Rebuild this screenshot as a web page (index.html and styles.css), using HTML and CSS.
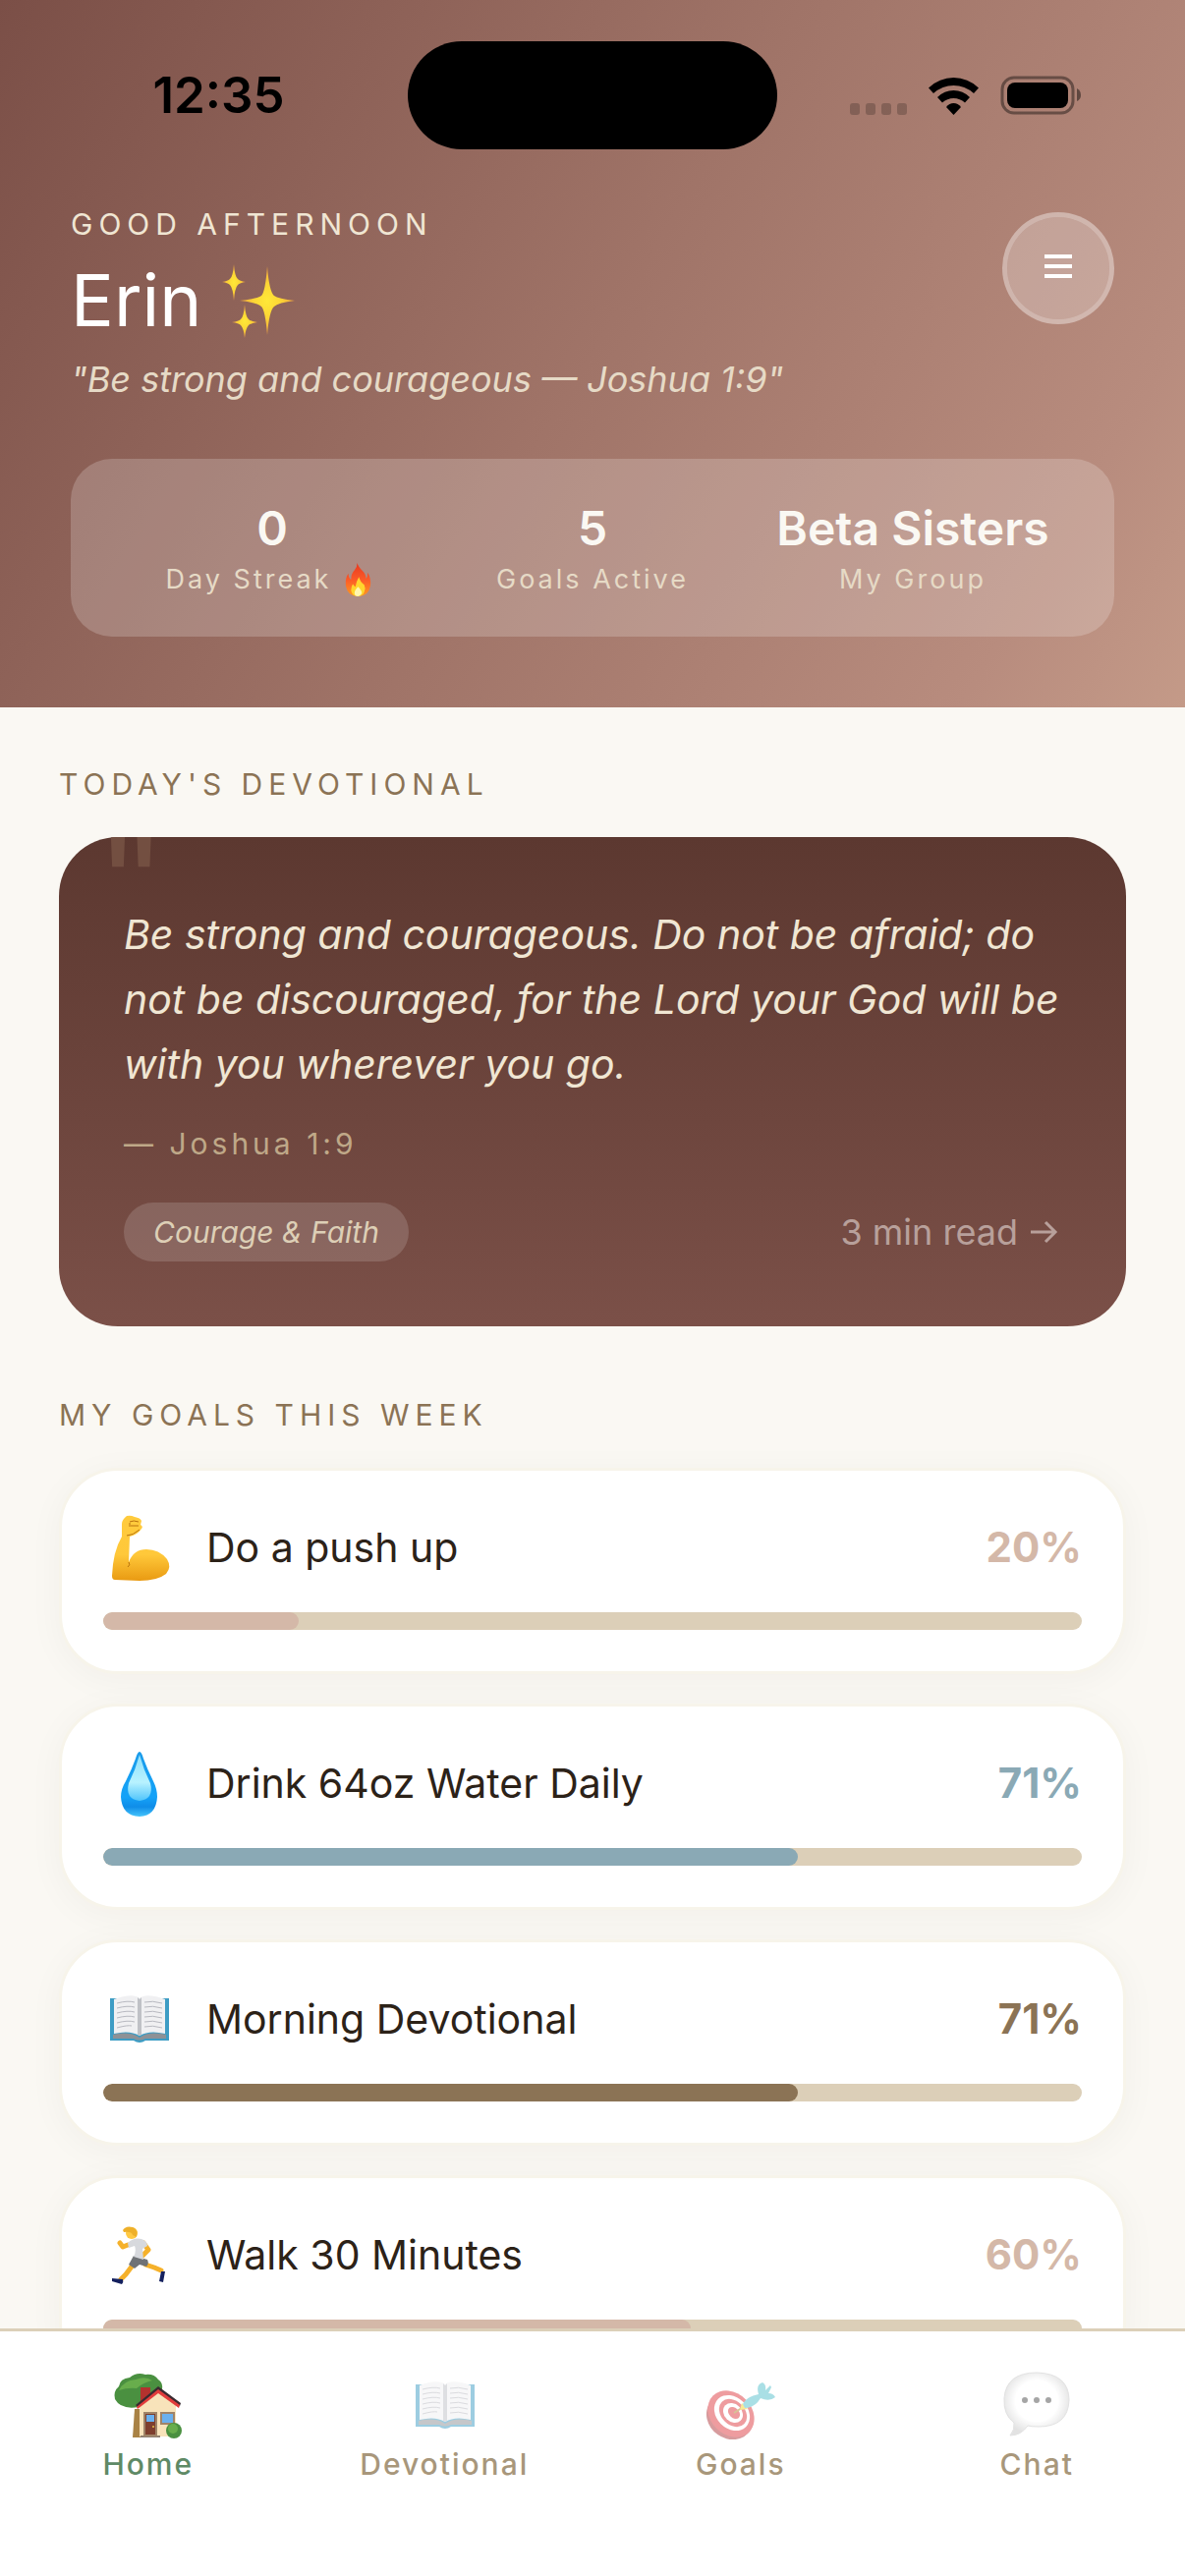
FILE: index.html
```
<!DOCTYPE html>
<html lang="en">
<head>
  <meta charset="UTF-8">
  <meta name="viewport" content="width=device-width, initial-scale=1">
  <title>Home</title>
  <link rel="stylesheet" href="styles.css">
</head>
<body>
  <header class="header">
    <!-- Status bar -->
    <div class="status-bar">
      <div class="status-time">12:35</div>
      <div class="island"></div>
      <div class="status-icons">
        <svg class="icon-signal" viewBox="0 0 58 12">
          <rect x="0" width="10" height="12" rx="3"/>
          <rect x="16" width="10" height="12" rx="3"/>
          <rect x="32" width="10" height="12" rx="3"/>
          <rect x="48" width="10" height="12" rx="3"/>
        </svg>
        <svg class="icon-wifi" viewBox="0 0 51 38">
          <path d="M0 10.500Q11 0 25.500 0Q40 0 51 10.500L46 16Q37 8 25.500 8Q14 8 5 16Z"/>
          <path d="M9 20Q16 13 25.500 13Q35 13 42 20L37 25.500Q32 21 25.500 21Q19 21 14 25.500Z"/>
          <path d="M18 30Q21 26 25.500 26Q30 26 33 30L25.500 38Z"/>
        </svg>
        <svg class="icon-battery" viewBox="0 0 84 40">
          <rect class="battery-shell" x="2" y="2" width="72" height="36" rx="12"/>
          <rect x="7" y="7" width="62" height="26" rx="8"/>
          <path class="battery-tip" d="M78 13Q82 15 82 20Q82 24 78 26Z"/>
        </svg>
      </div>
    </div>

    <div class="greeting-row">
      <div class="greeting">
        <p class="greeting-time">GOOD AFTERNOON</p>
        <h1 class="greeting-name">Erin
          <svg class="icon-sparkles" viewBox="0 0 76 76">
            <defs>
              <radialGradient id="gold">
                <stop offset="0" stop-color="#ffe838"/>
                <stop offset="0.500" stop-color="#fcd535"/>
                <stop offset="1" stop-color="#f0a040"/>
              </radialGradient>
            </defs>
            <path fill="url(#gold)" d="M47 3Q49 29 54 33Q58 36 75 38Q58 40 54 44Q49 48 47 73Q45 48 41 44Q37 40 19 38Q37 36 41 33Q45 29 47 3Z"/>
            <path fill="url(#gold)" d="M13 1Q14 14 17 16Q19 18 25 19Q19 20 17 22Q14 25 13 38Q12 25 9 22Q7 20 1 19Q7 18 9 16Q12 14 13 1Z"/>
            <path fill="url(#gold)" d="M24 42Q25 55 28 57Q30 59 37 60Q30 61 28 63Q25 66 24 76Q23 66 20 63Q18 61 11 60Q18 59 20 57Q23 55 24 42Z"/>
          </svg>
        </h1>
        <p class="greeting-verse">"Be strong and courageous — Joshua 1:9"</p>
      </div>
      <button class="menu-button" type="button" aria-label="Menu">
        <svg class="icon-menu" viewBox="0 0 28 24">
          <path d="M0 0H28V4H0ZM0 10H28V14H0ZM0 20H28V24H0Z"/>
        </svg>
      </button>
    </div>

    <div class="stats">
      <div class="stat">
        <div class="stat-value">0</div>
        <div class="stat-label">Day Streak
          <svg class="icon-fire" viewBox="0 0 38 38">
            <defs>
              <linearGradient id="flame" x2="0" y2="1">
                <stop offset="0" stop-color="#e83a20"/>
                <stop offset="0.500" stop-color="#fb5a28"/>
                <stop offset="1" stop-color="#ff9a20"/>
              </linearGradient>
            </defs>
            <path fill="url(#flame)" d="M14 0Q15 4 20 9Q24 13 24 18Q26 16 26 11Q30 18 29 26Q27 38 15 38Q3 38 1 26Q0 17 4 12Q4 17 7 19Q7 12 11 8Q14 5 14 0Z"/>
            <path fill="#ffd52e" d="M16 16Q17 21 22 25Q24 29 22 33Q20 38 15 38Q8 38 7 31Q7 27 9 24Q11 27 12 27Q13 21 16 16Z"/>
            <path fill="#fff6b0" d="M15 27Q20 32 19 35Q17 38 15 38Q11 38 11 34Q11 31 15 27Z"/>
          </svg>
        </div>
      </div>
      <div class="stat">
        <div class="stat-value">5</div>
        <div class="stat-label">Goals Active</div>
      </div>
      <div class="stat">
        <div class="stat-value">Beta Sisters</div>
        <div class="stat-label">My Group</div>
      </div>
    </div>
  </header>

  <main class="content">
    <h2 class="section-title">TODAY'S DEVOTIONAL</h2>
    <article class="devotional">
      <span class="quote-mark" aria-hidden="true">"</span>
      <p class="verse">Be strong and courageous. Do not be afraid; do not be discouraged, for the Lord your God will be with you wherever you go.</p>
      <p class="verse-ref">— Joshua 1:9</p>
      <div class="devotional-footer">
        <span class="tag">Courage &amp; Faith</span>
        <a class="read-link" href="#">3 min read
          <svg class="icon-arrow" viewBox="0 0 32 24"><path d="M1 12H26M16 2L26 12L16 22"/></svg>
        </a>
      </div>
    </article>

    <h2 class="section-title">MY GOALS THIS WEEK</h2>
    <section class="goals">
      <div class="goal rose">
        <div class="goal-row">
          <svg class="goal-icon" viewBox="0 0 72 72">
            <defs>
              <linearGradient id="arm" x2="0" y2="1">
                <stop offset="0" stop-color="#ffcb3d"/>
                <stop offset="0.600" stop-color="#ffc83a"/>
                <stop offset="1" stop-color="#e99a12"/>
              </linearGradient>
            </defs>
            <path fill="url(#arm)" d="M19 12Q19 8 24 4Q28 3 32 5Q38 6 39 9L38 13Q41 15 39 17Q35 23 27 25L26 51Q31 38 44 38Q57 38 65 48Q70 56 64 63Q55 70 37 70L12 69Q9 69 9 65Q10 40 19 25Z"/>
            <path fill="none" stroke="#b8720e" stroke-width="1" d="M24 24Q30 24 37 18M27 10Q31 8 36 10M28 14H36M27 11V15M26 51Q28 54 25 56"/>
          </svg>
          <span class="goal-name">Do a push up</span>
          <span class="goal-percent">20%</span>
        </div>
        <div class="track"><div class="fill" style="width: 20%"></div></div>
      </div>

      <div class="goal blue">
        <div class="goal-row">
          <svg class="goal-icon" viewBox="0 0 72 72">
            <defs>
              <linearGradient id="water" x2="0" y2="1">
                <stop offset="0" stop-color="#1a9bea"/>
                <stop offset="0.700" stop-color="#14a2f8"/>
                <stop offset="0.850" stop-color="#0f8de8"/>
                <stop offset="1" stop-color="#45c4fb"/>
              </linearGradient>
              <linearGradient id="shine" x2="0" y2="1">
                <stop offset="0" stop-color="#8fe0fb"/>
                <stop offset="0.600" stop-color="#b8f2ff"/>
                <stop offset="1" stop-color="#4fc4fb"/>
              </linearGradient>
            </defs>
            <path fill="url(#water)" d="M37 4Q39 4 41 11Q45 22 51 34Q55 42 55 50Q54 69 37 70Q19 69 18 50Q18 42 23 34Q29 22 33 11Q35 4 37 4Z"/>
            <path fill="url(#shine)" d="M37 7Q41 22 48 36Q52 52 37 54Q22 52 26 36Q33 22 37 7Z"/>
          </svg>
          <span class="goal-name">Drink 64oz Water Daily</span>
          <span class="goal-percent">71%</span>
        </div>
        <div class="track"><div class="fill" style="width: 71%"></div></div>
      </div>

      <div class="goal brown">
        <div class="goal-row">
          <svg class="goal-icon" viewBox="0 0 72 72">
            <g id="book">
              <path fill="#3d9cc4" d="M7 15H67V58H43Q37 62 31 58H7Z"/>
              <path fill="#8d9196" d="M10 52Q27 48 37 55Q47 48 64 52V56H43Q37 59 31 56H10Z"/>
              <path fill="#f0f0f2" d="M11 16Q30 9 37 15V53Q27 47 11 51Z"/>
              <path fill="#f0f0f2" d="M63 16Q44 9 37 15V53Q47 47 63 51Z"/>
              <path fill="#bfc1c6" d="M35 14L37 16L39 14V52L37 53L35 52Z"/>
              <path fill="none" stroke="#b8b9c0" d="M14 20Q25 17 32 19M14 25Q25 22 32 24M14 30Q25 27 32 29M14 35Q25 32 32 34M14 40Q25 37 32 39M14 45Q25 42 29 43M42 19Q50 17 60 20M42 24Q50 22 60 25M42 29Q50 27 60 30M42 34Q50 32 60 35M42 39Q50 37 60 40M42 44Q50 42 60 45"/>
            </g>
          </svg>
          <span class="goal-name">Morning Devotional</span>
          <span class="goal-percent">71%</span>
        </div>
        <div class="track"><div class="fill" style="width: 71%"></div></div>
      </div>

      <div class="goal rose">
        <div class="goal-row">
          <svg class="goal-icon" viewBox="0 0 72 72">
            <path fill="none" stroke="#f5b12b" stroke-width="5" stroke-linecap="round" stroke-linejoin="round" d="M25 26L20 28L17 24M41 24L46 31L39 38M29 48L23 56L18 61M43 46L52 49L59 52"/>
            <path fill="#14205e" d="M9 60L20 61Q21 64 19 66L9 63ZM59 53L63 53L61 64L57 63Z"/>
            <path fill="#6f7276" d="M31 37L45 41Q47 45 44 48L37 46L32 50L26 46Z"/>
            <path fill="#d7d9dd" d="M25 24Q31 18 39 20Q45 22 45 27L40 30L41 41L31 38Q34 32 32 27L26 29Z"/>
            <circle fill="#ffc943" cx="29" cy="14" r="6"/>
            <path fill="#eeb02a" d="M20 11Q23 6 30 8Q36 10 34 18L30 16Q29 12 21 13Z"/>
          </svg>
          <span class="goal-name">Walk 30 Minutes</span>
          <span class="goal-percent">60%</span>
        </div>
        <div class="track"><div class="fill" style="width: 60%"></div></div>
      </div>
    </section>
  </main>

  <nav class="tabs">
    <a class="tab active" href="#">
      <svg class="tab-icon" viewBox="0 0 72 72">
        <path fill="#a98245" d="M22 40H30V69H20Z"/>
        <path fill="#4a9040" d="M2 30Q0 22 6 17Q7 9 17 8Q24 2 33 5Q42 4 46 10Q51 13 50 20L48 34L26 38Q8 41 2 30Z"/>
        <path fill="#68ad4c" d="M6 21Q11 11 23 10Q33 6 40 11Q31 13 24 19Q15 18 6 21Z"/>
        <path fill="#b3322e" d="M28 18H38V28L28 36Z"/>
        <path fill="#f8e3ba" d="M27 37L46 22L64 36V68H27Z"/>
        <path fill="#3a2a30" d="M46 17L69 34L68 37L46 21L25 38L23 36Z"/>
        <path fill="#e23c3c" d="M46 20L68 36L67 39L46 24L25 40L24 38Z"/>
        <path fill="#8f8072" d="M28 67H48V69H28Z"/>
        <path fill="#7e3f2e" stroke="#a08468" stroke-width="2" d="M32 44H44V67H32Z"/>
        <path fill="#6bb0ee" stroke="#a08468" stroke-width="2" d="M49 44H62V55H49Z"/>
        <path fill="#6bb0ee" d="M34 46H42V53H34Z"/>
        <circle fill="#e8c04a" cx="41" cy="58" r="1"/>
        <circle fill="#4a9040" cx="62" cy="62" r="8"/>
        <circle fill="#68ad4c" cx="61" cy="60" r="5"/>
      </svg>
      <span>Home</span>
    </a>
    <a class="tab" href="#">
      <svg class="tab-icon" viewBox="0 0 72 72"><use href="#book"/></svg>
      <span>Devotional</span>
    </a>
    <a class="tab" href="#">
      <svg class="tab-icon" viewBox="0 0 72 72">
        <ellipse fill="#b03a3e" cx="25" cy="48" rx="25" ry="22" transform="rotate(35 25 48)"/>
        <ellipse fill="#de3c42" cx="26" cy="45" rx="26" ry="21" transform="rotate(45 26 45)"/>
        <ellipse fill="#fff" cx="27" cy="44" rx="20" ry="16" transform="rotate(45 27 44)"/>
        <ellipse fill="#de3c42" cx="28" cy="44" rx="16" ry="12" transform="rotate(45 28 44)"/>
        <ellipse fill="#fff" cx="28" cy="44" rx="11" ry="9" transform="rotate(45 28 44)"/>
        <ellipse fill="#de3c42" cx="29" cy="44" rx="7" ry="5" transform="rotate(45 29 44)"/>
        <path stroke="#b08a30" stroke-width="2" d="M29 44L40 37"/>
        <path fill="#f4d22e" d="M35 41L37 34L43 40Z"/>
        <path fill="#56c1cc" d="M38 35Q42 27 54 25Q51 15 58 13Q62 15 61 21L66 16L67 18L64 24Q69 24 71 28Q65 33 56 29Q50 39 40 39Z"/>
      </svg>
      <span>Goals</span>
    </a>
    <a class="tab" href="#">
      <svg class="tab-icon" viewBox="0 0 72 72">
        <defs>
          <radialGradient id="bubble" cx="0.500" cy="0.450" r="0.550">
            <stop offset="0.600" stop-color="#fff"/>
            <stop offset="1" stop-color="#c6c6c6"/>
          </radialGradient>
        </defs>
        <path fill="url(#bubble)" stroke="#c6c6c6" d="M36 3Q69 4 69 31Q68 58 38 58Q31 58 27 57Q20 67 9 67Q14 61 13 54Q2 46 3 29Q5 3 36 3Z"/>
        <path fill="#4d4d4d" d="M21 31a3 3 0 1 0 6 0a3 3 0 1 0-6 0M33 31a3 3 0 1 0 6 0a3 3 0 1 0-6 0M45 31a3 3 0 1 0 6 0a3 3 0 1 0-6 0"/>
      </svg>
      <span>Chat</span>
    </a>
  </nav>
</body>
</html>
```
FILE: styles.css
```
* {
  box-sizing: border-box;
}
body {
  font-family: Inter, sans-serif;
  background: #faf8f3;
  margin: 0;
  height: 100vh;
  display: flex;
  flex-direction: column;
  color: #2c2218;
}
h1, h2, p {
  margin: 0;
  font-weight: 400;
}
a {
  text-decoration: none;
}
svg {
  display: block;
  flex: none;
}

/* Header */
.header {
  flex: none;
  background: linear-gradient(121deg, #7b4f47, #a07468 50%, #b88c7e 86%, #c49a88);
  padding: 42px 72px 72px;
}
.status-bar {
  display: grid;
  grid-template-columns: 1fr 376px 1fr;
  align-items: center;
}
.status-time {
  text-align: center;
  font-size: 51px;
  line-height: 60px;
  font-weight: 600;
  color: #000;
  padding-right: 42px;
}
.island {
  height: 110px;
  border-radius: 55px;
  background: #000;
}
.status-icons {
  display: flex;
  align-items: flex-end;
  justify-content: flex-end;
  gap: 22px;
  padding-right: 32px;
}
.icon-signal {
  width: 58px;
  height: 12px;
  opacity: 0.2;
}
.icon-wifi {
  width: 51px;
  height: 38px;
}
.icon-battery {
  width: 84px;
  height: 40px;
}
.battery-shell {
  fill: none;
  stroke: #000;
  stroke-width: 3;
  opacity: 0.4;
}
.battery-tip {
  opacity: 0.45;
}
.greeting-row {
  display: flex;
  justify-content: space-between;
  align-items: flex-start;
  padding-top: 58px;
}
.greeting-time {
  font-size: 30px;
  line-height: 36px;
  letter-spacing: 6px;
  color: #f0e6d3;
}
.greeting-name {
  display: flex;
  align-items: center;
  gap: 20px;
  margin-top: 14px;
  font-size: 73px;
  line-height: 92px;
  color: #fff;
}
.icon-sparkles {
  width: 76px;
  height: 76px;
}
.greeting-verse {
  margin-top: 12px;
  font-size: 36px;
  line-height: 44px;
  font-style: italic;
  color: #e6dac6;
}
.menu-button {
  width: 114px;
  height: 114px;
  margin-top: 6px;
  padding: 0 0 4px;
  display: flex;
  align-items: center;
  justify-content: center;
  border: 5px solid rgba(255, 255, 255, 0.4);
  border-radius: 50%;
  background: rgba(255, 255, 255, 0.25);
  background-clip: padding-box;
  cursor: pointer;
}
.icon-menu {
  width: 28px;
  height: 24px;
  fill: #fff;
}
.stats {
  display: grid;
  grid-template-columns: repeat(3, 1fr);
  margin-top: 59px;
  padding: 42px 42px 40px;
  border-radius: 42px;
  background: rgba(255, 255, 255, 0.2);
  text-align: center;
}
.stat-value {
  font-size: 48px;
  line-height: 58px;
  font-weight: 600;
  color: #faf8f3;
  white-space: nowrap;
}
.stat-label {
  display: flex;
  align-items: center;
  justify-content: center;
  gap: 14px;
  margin-top: 5px;
  font-size: 27px;
  line-height: 36px;
  letter-spacing: 3px;
  color: #e6dac6;
}
.icon-fire {
  width: 34px;
  height: 34px;
}

/* Content */
.content {
  flex: 1;
  min-height: 0;
  overflow: hidden;
  padding: 60px 60px 0;
}
.section-title {
  font-size: 30px;
  line-height: 36px;
  letter-spacing: 6px;
  color: #8b7355;
}
.devotional {
  position: relative;
  overflow: hidden;
  margin: 36px 0 72px;
  padding: 66px;
  border-radius: 60px;
  background: linear-gradient(#5c3830, #7b5048);
}
.quote-mark {
  position: absolute;
  top: -6px;
  left: 36px;
  font-size: 160px;
  line-height: 100px;
  color: #734f41;
}
.verse {
  font-size: 41px;
  line-height: 66px;
  font-style: italic;
  color: #f0e6d3;
}
.verse-ref {
  margin-top: 30px;
  font-size: 30px;
  line-height: 36px;
  letter-spacing: 4px;
  color: #bfa888;
}
.devotional-footer {
  display: flex;
  justify-content: space-between;
  align-items: center;
  margin-top: 42px;
}
.tag {
  padding: 12px 30px;
  border-radius: 30px;
  background: rgba(255, 255, 255, 0.15);
  font-size: 30px;
  line-height: 36px;
  font-style: italic;
  color: #ddcfb6;
}
.read-link {
  display: flex;
  align-items: center;
  gap: 12px;
  font-size: 36px;
  line-height: 42px;
  color: #b8a09b;
}
.icon-arrow {
  width: 32px;
  height: 24px;
  fill: none;
  stroke: #b8a09b;
  stroke-width: 3;
}
.goals {
  display: flex;
  flex-direction: column;
  gap: 30px;
  margin-top: 36px;
}
.goal {
  padding: 42px;
  border: 3px solid #f7f4ea;
  border-radius: 60px;
  background: #fff;
  box-shadow: 0 6px 36px rgba(44, 34, 24, 0.04);
}
.goal-row {
  display: flex;
  align-items: center;
  height: 72px;
  margin-bottom: 30px;
}
.goal-icon {
  width: 72px;
  height: 72px;
}
.goal-name {
  flex: 1;
  margin-left: 33px;
  font-size: 41px;
  line-height: 50px;
}
.goal-percent {
  font-size: 42px;
  line-height: 50px;
  font-weight: 700;
}
.track {
  height: 18px;
  border-radius: 9px;
  background: #dccfb8;
  overflow: hidden;
}
.fill {
  height: 100%;
  border-radius: 9px;
}
.rose .fill {
  background: #d4b8a8;
}
.rose .goal-percent {
  color: #d4b8a8;
}
.blue .fill {
  background: #8aa9b5;
}
.blue .goal-percent {
  color: #8aa9b5;
}
.brown .fill {
  background: #8b7355;
}
.brown .goal-percent {
  color: #8b7355;
}

/* Bottom tabs */
.tabs {
  position: relative;
  flex: none;
  display: grid;
  grid-template-columns: repeat(4, 1fr);
  padding: 39px 0 96px;
  border-top: 3px solid #dccfb8;
  background: #fff;
}
.tab {
  display: flex;
  flex-direction: column;
  align-items: center;
  gap: 6px;
  font-size: 30px;
  line-height: 36px;
  font-weight: 500;
  letter-spacing: 2px;
  color: #a8977b;
}
.tab-icon {
  width: 72px;
  height: 72px;
  opacity: 0.5;
}
.tab.active {
  color: #5f8a66;
}
.tab.active .tab-icon {
  opacity: 1;
}
```
